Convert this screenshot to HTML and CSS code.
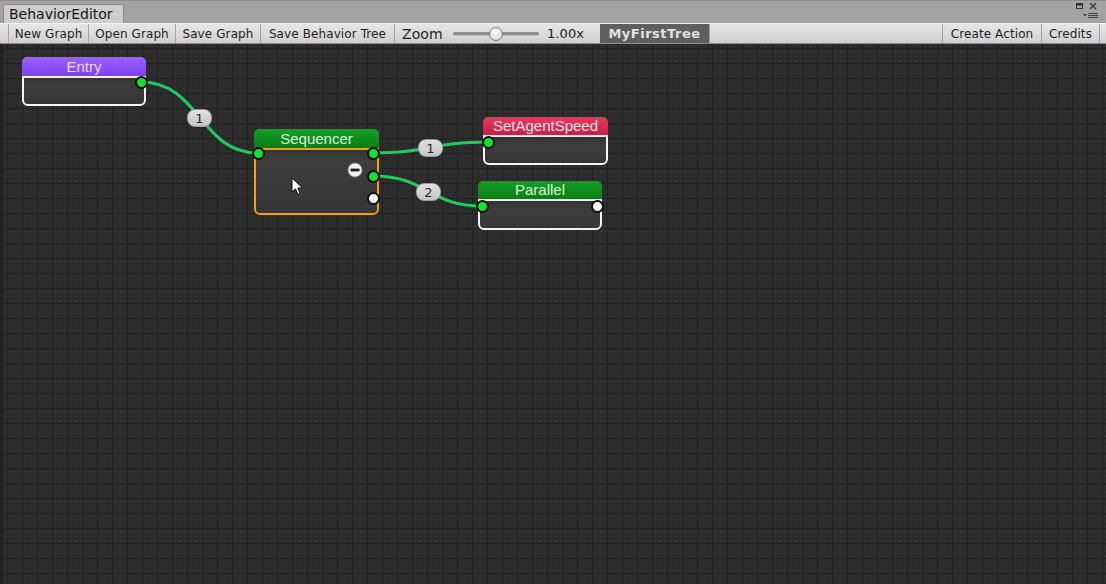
FILE: index.html
```html
<!DOCTYPE html>
<html>
<head>
<meta charset="utf-8">
<link rel="stylesheet" href="styles.css">
</head>
<body>
<div class="window">
  <div class="tabbar">
    <div class="tab">BehaviorEditor</div>
    <div class="winctl">
      <svg width="30" height="22" viewBox="0 0 30 22">
        <rect x="4.5" y="3.5" width="6" height="5" fill="none" stroke="#333" stroke-width="1"/>
        <rect x="4.5" y="3.5" width="6" height="2" fill="#333"/>
        <path d="M18 3 L24 9 M24 3 L18 9" stroke="#333" stroke-width="1.3"/>
        <path d="M11 14 L15 14 L13 16.5 Z" fill="#333"/>
        <path d="M16 13.5 H26 M16 15.5 H26 M16 17.5 H26" stroke="#444" stroke-width="1"/>
      </svg>
    </div>
  </div>
  <div class="toolbar">
    <div class="tbtn w-new">New Graph</div>
    <div class="tbtn w-open">Open Graph</div>
    <div class="tbtn w-save">Save Graph</div>
    <div class="tbtn w-savebt">Save Behavior Tree</div>
    <div class="tzoom">
      <span class="zlabel">Zoom</span>
      <div class="slider"><div class="track"></div><div class="thumb"></div></div>
      <span class="zval">1.00x</span>
    </div>
    <div class="treename">MyFirstTree</div>
    <div class="spacer"></div>
    <div class="tbtn w-create">Create Action</div>
    <div class="tbtn w-credits">Credits</div>
  </div>
  <div class="canvas">
    <svg class="edges" width="1106" height="540" viewBox="0 0 1106 540">
      <path d="M141 38 C200 38, 200 109, 258 109" />
      <path d="M373 109 C430 109, 430 98, 488 98" />
      <path d="M373 132 C428 132, 428 162, 482 162" />
    </svg>

    <div class="elabel" style="left:187px;top:65px">1</div>
    <div class="elabel" style="left:418px;top:95px">1</div>
    <div class="elabel" style="left:416px;top:139px">2</div>

    <div class="node n-entry">
      <div class="nhead h-purple">Entry</div>
      <div class="nbody"></div>
    </div>
    <div class="node n-seq">
      <div class="nhead h-green">Sequencer</div>
      <div class="nbody orange"></div>
    </div>
    <div class="node n-set">
      <div class="nhead h-red">SetAgentSpeed</div>
      <div class="nbody"></div>
    </div>
    <div class="node n-par">
      <div class="nhead h-green">Parallel</div>
      <div class="nbody"></div>
    </div>

    <div class="port green" style="left:135px;top:32px"></div>
    <div class="port green" style="left:252px;top:103px"></div>
    <div class="port green" style="left:367px;top:103px"></div>
    <div class="port green" style="left:367px;top:126px"></div>
    <div class="port white" style="left:367px;top:148px"></div>
    <div class="port green" style="left:482px;top:92px"></div>
    <div class="port green" style="left:476px;top:156px"></div>
    <div class="port white" style="left:591px;top:156px"></div>

    <svg class="minus" width="16" height="16" viewBox="0 0 16 16">
      <circle cx="8" cy="8" r="7" fill="#f2f2f2" stroke="#888" stroke-width="0.8"/>
      <rect x="3.5" y="6.6" width="9" height="2.8" fill="#222"/>
    </svg>

    <svg class="cursor" width="14" height="20" viewBox="0 0 14 20">
      <path d="M1 1 L1 15 L4.5 11.8 L7 17.5 L9.2 16.5 L6.8 11 L11.5 11 Z" fill="#fff" stroke="#111" stroke-width="1"/>
    </svg>
  </div>
</div>
</body>
</html>
```

FILE: styles.css
```css
html, body {
  margin: 0;
  padding: 0;
}
body {
  width: 1106px;
  height: 584px;
  overflow: hidden;
  background: #2b2b2b;
  font-family: "DejaVu Sans", "Liberation Sans", sans-serif;
}
.window {
  display: flex;
  flex-direction: column;
  width: 1106px;
  height: 584px;
}
.tabbar {
  height: 23px;
  flex: none;
  background: #a3a3a3;
  display: flex;
  align-items: flex-end;
  padding-left: 3px;
  position: relative;
  box-sizing: border-box;
  border-top: 1px solid #8e8e8e;
}
.tab {
  height: 18px;
  line-height: 18px;
  padding: 0 5px;
  background: #cdcdcd;
  border: 1px solid #8a8a8a;
  border-bottom: none;
  border-radius: 2px 2px 0 0;
  font-size: 14px;
  color: #151515;
  width: 109px;
  box-sizing: content-box;
}
.winctl {
  position: absolute;
  right: 4px;
  top: -1px;
  height: 22px;
}
.toolbar {
  height: 21px;
  flex: none;
  display: flex;
  align-items: stretch;
  padding-left: 8px;
  padding-right: 6px;
  background: linear-gradient(#e6e6e6, #d0d0d0);
  border-top: 1px solid #f2f2f2;
  border-bottom: 1px solid #8c8c8c;
  box-sizing: border-box;
  font-size: 12px;
  color: #1e1e1e;
  letter-spacing: 0.1px;
}
.tbtn {
  display: flex;
  align-items: center;
  justify-content: center;
  border-left: 1px solid #a4a4a4;
  box-sizing: border-box;
  white-space: nowrap;
}
.w-new { width: 80px; }
.w-open { width: 87px; }
.w-save { width: 85px; }
.w-savebt { width: 134px; }
.w-create { width: 99px; }
.w-credits { width: 59px; border-right: 1px solid #a4a4a4; }
.tzoom {
  width: 206px;
  display: flex;
  align-items: center;
  border-left: 1px solid #a4a4a4;
  box-sizing: border-box;
  padding-left: 7px;
}
.zlabel {
  font-size: 14px;
  width: 51px;
}
.slider {
  position: relative;
  width: 86px;
  height: 14px;
}
.track {
  position: absolute;
  left: 0;
  right: 0;
  top: 5px;
  height: 3px;
  background: #8e8e8e;
  border-radius: 2px;
  border-bottom: 1px solid #bdbdbd;
}
.thumb {
  position: absolute;
  left: 36px;
  top: 0;
  width: 12px;
  height: 12px;
  border-radius: 50%;
  background: radial-gradient(circle at 45% 35%, #ffffff, #cfcfcf);
  border: 1px solid #7a7a7a;
}
.zval {
  margin-left: 8px;
  font-size: 13px;
}
.treename {
  width: 109px;
  background: #5f5f5f;
  color: #e2e2e2;
  font-weight: bold;
  font-size: 13px;
  display: flex;
  align-items: center;
  justify-content: center;
  letter-spacing: 0.5px;
}
.spacer {
  flex: 1;
  border-left: 1px solid #a4a4a4;
}
.canvas {
  flex: 1;
  position: relative;
  background-color: #2c2c2c;
  background-image:
    linear-gradient(to right, #222222 1px, transparent 1px),
    linear-gradient(to bottom, #222222 1px, transparent 1px),
    radial-gradient(circle, #383838 0.6px, transparent 0.8px);
  background-size: 15px 15px, 15px 15px, 5px 5px;
  background-position: 4px 0, 0 4px, 0 0;
  overflow: hidden;
  border-left: 3px solid #232323;
  box-sizing: border-box;
}
.edges {
  position: absolute;
  left: -3px;
  top: 0;
}
.edges path {
  fill: none;
  stroke: #1fcc5e;
  stroke-width: 3;
}
.elabel {
  position: absolute;
  width: 25px;
  height: 18px;
  line-height: 17px;
  border-radius: 8px;
  background: linear-gradient(#e0e0e0, #c6c6c6);
  border: 1px solid #9a9a9a;
  box-sizing: border-box;
  text-align: center;
  font-size: 13px;
  color: #2a2a2a;
  margin-left: -3px;
}
.node {
  position: absolute;
  display: flex;
  flex-direction: column;
  margin-left: -3px;
}
.n-entry { left: 22px; top: 13px; width: 124px; }
.n-seq { left: 254px; top: 85px; width: 125px; }
.n-set { left: 483px; top: 73px; width: 125px; }
.n-par { left: 478px; top: 137px; width: 124px; }
.nhead {
  height: 19px;
  line-height: 19px;
  border-radius: 5px 5px 0 0;
  text-align: center;
  font-family: "Liberation Sans", Arial, sans-serif;
  font-size: 15px;
}
.h-purple {
  background: linear-gradient(#9c63ff, #7c3ff2);
  color: #eadcff;
}
.h-green {
  background: linear-gradient(#14a024, #0a7d16);
  color: #d8f5d8;
}
.h-red {
  background: linear-gradient(#e83a5e, #c81f42);
  color: #ffe2e8;
}
.n-set .nhead { height: 18px; line-height: 18px; }
.n-par .nhead { height: 18px; line-height: 18px; }
.nbody {
  height: 30px;
  border: 2px solid #f4f4f4;
  border-radius: 0 0 6px 6px;
  background: linear-gradient(#303030 0, #3a3a3a 4px, #3c3c3c 12px, #363636 100%);
  box-sizing: border-box;
}
.n-set .nbody { height: 30px; }
.n-par .nbody { height: 31px; }
.nbody.orange {
  border-color: #f0a10c;
  height: 67px;
}
.port {
  position: absolute;
  width: 13px;
  height: 13px;
  border-radius: 50%;
  box-sizing: border-box;
  border: 2px solid #0a0a0a;
  margin-left: -3px;
}
.port.green { background: #14e22e; }
.port.white { background: #ffffff; }
.minus {
  position: absolute;
  left: 344px;
  top: 118px;
}
.cursor {
  position: absolute;
  left: 288px;
  top: 133px;
}
```
